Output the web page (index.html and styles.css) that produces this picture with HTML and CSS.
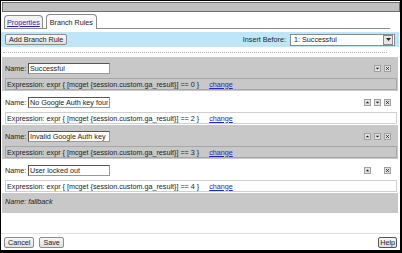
FILE: index.html
```html
<!DOCTYPE html>
<html lang="en">
<head>
    <meta charset="UTF-8">
    <title>Branch Rules</title>
    <link rel="stylesheet" href="styles.css">
</head>
<body>
    <div class="frame">
        <div class="titlebar"></div>

        <div class="tabs">
            <span class="tab"><a href="#properties">Properties</a></span>
            <span class="tab active">Branch Rules</span>
        </div>

        <div class="toolbar">
            <button class="btn">Add Branch Rule</button>
            <span class="insert-label">Insert Before:</span>
            <div class="select">
                <span class="select-text">1: Successful</span>
                <span class="select-arrow"><svg width="5" height="3" viewBox="0 0 5 3"><path d="M0 0h5L2.5 3z"/></svg></span>
            </div>
        </div>

        <div class="dots"></div>

        <div class="rules">
            <div class="rule grey">
                <div class="name-row">
                    <span class="label">Name:</span>
                    <input class="name-input" type="text" value="Successful">
                    <div class="ctrls">
                        <span class="ctrl hidden"></span>
                        <span class="ctrl"><svg width="5" height="5" viewBox="0 0 5 5"><path d="M0.8 1.8h3.4L2.5 3.6z"/></svg></span>
                        <span class="ctrl"><svg width="5" height="5" viewBox="0 0 5 5"><path class="x" d="M1.1 1.1L3.9 3.9M3.9 1.1L1.1 3.9"/></svg></span>
                    </div>
                </div>
                <div class="expr">Expression: expr { [mcget {session.custom.ga_result}] == 0 } <a href="#">change</a></div>
            </div>

            <div class="rule">
                <div class="name-row">
                    <span class="label">Name:</span>
                    <input class="name-input" type="text" value="No Google Auth key found">
                    <div class="ctrls">
                        <span class="ctrl"><svg width="5" height="5" viewBox="0 0 5 5"><path d="M0.8 3.2h3.4L2.5 1.4z"/></svg></span>
                        <span class="ctrl"><svg width="5" height="5" viewBox="0 0 5 5"><path d="M0.8 1.8h3.4L2.5 3.6z"/></svg></span>
                        <span class="ctrl"><svg width="5" height="5" viewBox="0 0 5 5"><path class="x" d="M1.1 1.1L3.9 3.9M3.9 1.1L1.1 3.9"/></svg></span>
                    </div>
                </div>
                <div class="expr">Expression: expr { [mcget {session.custom.ga_result}] == 2 } <a href="#">change</a></div>
            </div>

            <div class="rule grey">
                <div class="name-row">
                    <span class="label">Name:</span>
                    <input class="name-input" type="text" value="Invalid Google Auth key">
                    <div class="ctrls">
                        <span class="ctrl"><svg width="5" height="5" viewBox="0 0 5 5"><path d="M0.8 3.2h3.4L2.5 1.4z"/></svg></span>
                        <span class="ctrl"><svg width="5" height="5" viewBox="0 0 5 5"><path d="M0.8 1.8h3.4L2.5 3.6z"/></svg></span>
                        <span class="ctrl"><svg width="5" height="5" viewBox="0 0 5 5"><path class="x" d="M1.1 1.1L3.9 3.9M3.9 1.1L1.1 3.9"/></svg></span>
                    </div>
                </div>
                <div class="expr">Expression: expr { [mcget {session.custom.ga_result}] == 3 } <a href="#">change</a></div>
            </div>

            <div class="rule">
                <div class="name-row">
                    <span class="label">Name:</span>
                    <input class="name-input" type="text" value="User locked out">
                    <div class="ctrls">
                        <span class="ctrl"><svg width="5" height="5" viewBox="0 0 5 5"><path d="M0.8 3.2h3.4L2.5 1.4z"/></svg></span>
                        <span class="ctrl hidden"></span>
                        <span class="ctrl"><svg width="5" height="5" viewBox="0 0 5 5"><path class="x" d="M1.1 1.1L3.9 3.9M3.9 1.1L1.1 3.9"/></svg></span>
                    </div>
                </div>
                <div class="expr">Expression: expr { [mcget {session.custom.ga_result}] == 4 } <a href="#">change</a></div>
            </div>

            <div class="fallback">Name: fallback</div>
        </div>

        <div class="spacer"></div>

        <div class="footer">
            <button class="btn">Cancel</button>
            <button class="btn">Save</button>
            <button class="btn help">Help</button>
        </div>
    </div>
</body>
</html>
```

FILE: styles.css
```css
body {
    margin: 0;
    background-color: #fff;
    font-family: "Liberation Sans", Arial, sans-serif;
    font-size: 7.2px;
    color: #222;
}

.frame {
    width: 402px;
    height: 253px;
    box-sizing: border-box;
    border: 1px solid #000;
    border-right-width: 2px;
    border-bottom-width: 3px;
    display: flex;
    flex-direction: column;
}

.titlebar {
    height: 10px;
    box-sizing: border-box;
    margin: 1px 0 0 1px;
    background-color: #c0c0c0;
    border: 1px solid #6e6e6e;
}

.tabs {
    display: flex;
    align-items: flex-end;
    gap: 3px;
    height: 14px;
    margin: 2px 10px 0 3px;
    border-bottom: 1px solid #8a8a8a;
}

.tab {
    display: flex;
    align-items: center;
    height: 12px;
    padding: 0 2px;
    border: 1px solid #8a8a8a;
    border-bottom: none;
    border-radius: 4px 4px 0 0;
    background-color: #f2f2f2;
}

.tab a {
    color: #2a2ab0;
}

.tab.active {
    height: 14px;
    padding: 0 3px;
    margin-bottom: -1px;
    background-color: #fff;
}

.toolbar {
    display: flex;
    align-items: center;
    height: 15px;
    margin: 3px 1px 0 0;
    padding: 0 4px 0 4px;
    background-color: #bfe6f6;
}

.btn {
    height: 11px;
    padding: 0 3px;
    margin: 0;
    font-family: inherit;
    font-size: 7.2px;
    line-height: 9px;
    color: #222;
    background: linear-gradient(#f8f8f8, #e0e0e0);
    border: 1px solid #8c8c8c;
    border-radius: 2px;
}

.insert-label {
    margin-left: auto;
    margin-right: 4px;
}

.select {
    display: flex;
    align-items: center;
    width: 105px;
    height: 12px;
    box-sizing: border-box;
    background-color: #fff;
    border: 1px solid #8a8a8a;
}

.select-text {
    flex: 1;
    padding-left: 3px;
}

.select-arrow {
    display: flex;
    align-items: center;
    justify-content: center;
    width: 8px;
    height: 8px;
    margin-right: 1px;
    background-color: #e6e6e6;
    border: 1px solid #8a8a8a;
}

.select-arrow svg {
    fill: #222;
}

.dots {
    margin: 5px 13px 0 2px;
    border-top: 1px dotted #b4b4b4;
}

.rules {
    margin: 4px 2px 0 1px;
}

.rule {
    height: 34px;
    box-sizing: border-box;
    padding: 4px 0 1px 3px;
}

.grey {
    background-color: #c8c8c8;
}

.name-row {
    display: flex;
    align-items: center;
    height: 14px;
}

.label {
    width: 23px;
}

.name-input {
    width: 82px;
    height: 11px;
    box-sizing: border-box;
    margin: 0;
    padding: 0 1px;
    font-family: inherit;
    font-size: 7.2px;
    color: #222;
    background-color: #fff;
    border: 1px solid #555;
    border-right-color: #999;
    border-bottom-color: #999;
    outline: none;
}

.ctrls {
    display: flex;
    gap: 3px;
    margin-left: auto;
    padding-right: 7px;
}

.ctrl {
    display: flex;
    align-items: center;
    justify-content: center;
    width: 7px;
    height: 7px;
    box-sizing: border-box;
    background-color: #e2e2e2;
    border: 1px solid #a0a0a0;
}

.ctrl svg {
    fill: #111;
}

.ctrl .x {
    fill: none;
    stroke: #222;
    stroke-width: 0.9;
}

.ctrl.hidden {
    visibility: hidden;
}

.expr {
    display: flex;
    align-items: center;
    height: 12px;
    box-sizing: border-box;
    margin: 3px 1px 0 0;
    padding-left: 1px;
    background-color: #fff;
    border: 1px solid #cfcfcf;
    white-space: pre;
}

.grey .expr {
    background-color: #c8c8c8;
    border-color: #a6a6a6;
}

.expr a {
    margin-left: 8px;
    color: #2a2ab0;
}

.fallback {
    height: 20px;
    box-sizing: border-box;
    padding: 4px 0 0 3px;
    line-height: 9px;
    font-style: italic;
    background-color: #c8c8c8;
}

.spacer {
    flex: 1;
}

.footer {
    display: flex;
    gap: 5px;
    padding: 3px 3px 2px 3px;
    border-top: 1px solid #e2e2e2;
}

.footer .help {
    margin-left: auto;
    padding: 0 1px;
    border-color: #555;
}
```
